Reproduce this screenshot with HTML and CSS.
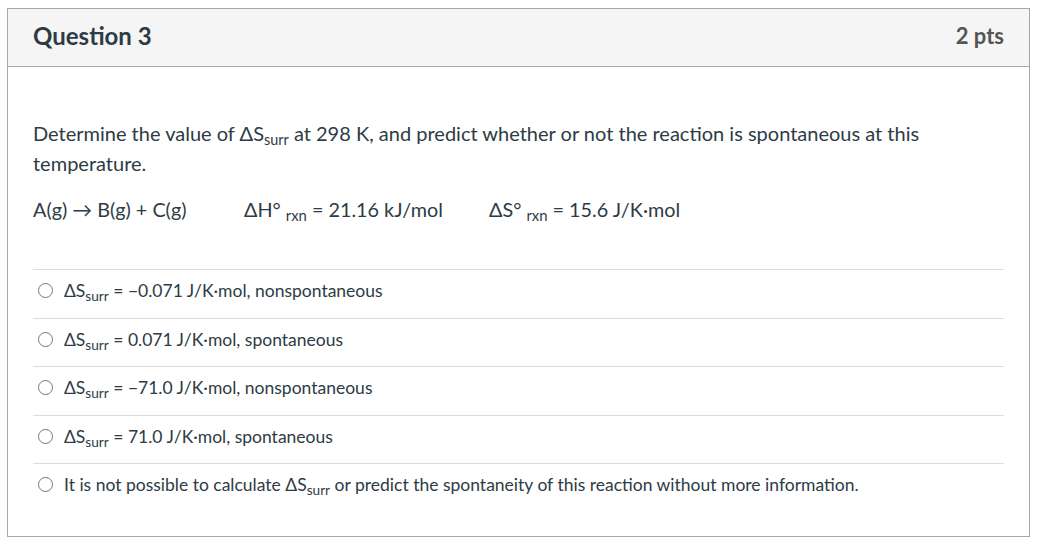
FILE: index.html
```html
<!DOCTYPE html>
<html>
<head>
<meta charset="utf-8">
<link rel="stylesheet" href="styles.css">
</head>
<body>
<div class="question">
  <div class="q-header">
    <h2 class="q-title">Question 3</h2>
    <div class="q-points">2 pts</div>
  </div>
  <div class="q-body">
    <p class="q-text">Determine the value of ΔS<sub>surr</sub> at 298 K, and predict whether or not the reaction is spontaneous at this temperature.</p>
    <p class="q-eq">
      <span class="eq-col eq-a">A(g) → B(g) + C(g)</span>
      <span class="eq-col eq-b">ΔH° <sub>rxn</sub> = 21.16 kJ/mol</span>
      <span class="eq-col">ΔS° <sub>rxn</sub> = 15.6 J/K·mol</span>
    </p>
    <div class="answers">
      <label class="answer"><span class="radio"></span><span>ΔS<sub>surr</sub> = −0.071 J/K·mol, nonspontaneous</span></label>
      <label class="answer"><span class="radio"></span><span>ΔS<sub>surr</sub> = 0.071 J/K·mol, spontaneous</span></label>
      <label class="answer"><span class="radio"></span><span>ΔS<sub>surr</sub> = −71.0 J/K·mol, nonspontaneous</span></label>
      <label class="answer"><span class="radio"></span><span>ΔS<sub>surr</sub> = 71.0 J/K·mol, spontaneous</span></label>
      <label class="answer"><span class="radio"></span><span>It is not possible to calculate ΔS<sub>surr</sub> or predict the spontaneity of this reaction without more information.</span></label>
    </div>
  </div>
</div>
</body>
</html>
```
FILE: styles.css
```css
html, body {
  margin: 0;
  padding: 0;
  background: #fff;
}
body {
  padding: 8px 19px 0 7px;
  font-family: Lato, "Open Sans", sans-serif;
  color: #2d3b45;
}
.question {
  border: 1px solid #a8a8a8;
  height: 529px;
  box-sizing: border-box;
}
.q-header {
  background: #f5f5f5;
  border-bottom: 1px solid #a8a8a8;
  height: 58px;
  box-sizing: border-box;
  display: flex;
  align-items: center;
  justify-content: space-between;
  padding: 0 25px 4px 25px;
}
.q-title {
  margin: 0;
  font-size: 24px;
  font-weight: 700;
  color: #2d3b45;
}
.q-points {
  font-size: 22px;
  font-weight: 700;
  color: #555;
}
.q-body {
  padding: 51px 25px 0 25px;
}
.q-text {
  margin: 0;
  font-size: 20px;
  line-height: 30px;
}
sub {
  font-size: 72%;
  vertical-align: -0.3em;
  line-height: 0;
}
.q-eq {
  margin: 16px 0 0 0;
  font-size: 19.8px;
  line-height: 30px;
  display: flex;
}
.eq-col sub {
  vertical-align: -0.3em;
  font-size: 75%;
}
.eq-a { width: 211px; }
.eq-b { width: 245px; }
.answers {
  margin-top: 45px;
}
.answer {
  display: flex;
  align-items: center;
  gap: 11px;
  border-top: 1px solid #dcdcdc;
  height: 48.5px;
  box-sizing: border-box;
  padding-left: 5px;
  padding-bottom: 6px;
  font-size: 17.5px;
  color: #2d3b45;
}
.answer sub {
  font-size: 78%;
  vertical-align: -0.3em;
}
.radio {
  width: 13px;
  height: 13px;
  border: 1px solid #777;
  border-radius: 50%;
  flex: none;
  background: #fff;
}
```
